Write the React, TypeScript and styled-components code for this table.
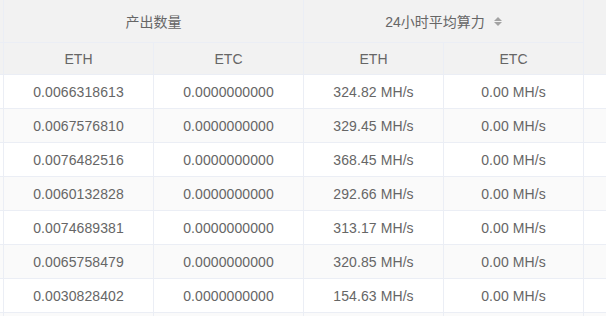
import React from 'react';
import styled, { createGlobalStyle } from 'styled-components';

const GlobalStyle = createGlobalStyle`
  html, body {
    margin: 0;
    padding: 0;
    background: #fff;
  }
  body {
    font-family: 'Liberation Sans', Arial, 'Noto Sans CJK SC', sans-serif;
    font-size: 14px;
    color: #666;
    overflow: hidden;
  }
`;

const borderColor = '#ebeef5';

const Table = styled.div`
  display: grid;
  grid-template-columns: 4px 150px 150px 140px 140px 1fr;
  grid-template-rows: 43px 32px;
  grid-auto-rows: 34px;
  width: 606px;
  height: 316px;
  overflow: hidden;
`;

const HeadCell = styled.div<{ $rows?: number; $cols?: number; $last?: boolean }>`
  grid-row: span ${p => p.$rows || 1};
  grid-column: span ${p => p.$cols || 1};
  background: #f2f2f2;
  border-right: ${p => (p.$last ? 'none' : `1px solid ${borderColor}`)};
  border-bottom: 1px solid ${borderColor};
  display: flex;
  align-items: center;
  justify-content: center;
  color: #666;
  font-family: 'Liberation Sans', 'Noto Sans CJK SC', sans-serif;
`;

const Cell = styled.div<{ $striped?: boolean; $last?: boolean }>`
  background: ${p => (p.$striped ? '#fafafa' : '#fff')};
  border-right: ${p => (p.$last ? 'none' : `1px solid ${borderColor}`)};
  border-bottom: 1px solid ${borderColor};
  display: flex;
  align-items: center;
  justify-content: center;
  white-space: nowrap;
  overflow: hidden;
  letter-spacing: 0.1px;
`;

const SortIcon = styled.span`
  display: inline-flex;
  flex-direction: column;
  gap: 1px;
  margin-left: 9px;
  margin-top: 1px;

  i {
    width: 0;
    height: 0;
    border-left: 4.5px solid transparent;
    border-right: 4.5px solid transparent;
  }
  i:first-child {
    border-bottom: 4px solid #a3a3a3;
  }
  i:last-child {
    border-top: 4px solid #a3a3a3;
  }
`;

const rows = [
  ['0.0066318613', '0.0000000000', '324.82 MH/s', '0.00 MH/s'],
  ['0.0067576810', '0.0000000000', '329.45 MH/s', '0.00 MH/s'],
  ['0.0076482516', '0.0000000000', '368.45 MH/s', '0.00 MH/s'],
  ['0.0060132828', '0.0000000000', '292.66 MH/s', '0.00 MH/s'],
  ['0.0074689381', '0.0000000000', '313.17 MH/s', '0.00 MH/s'],
  ['0.0065758479', '0.0000000000', '320.85 MH/s', '0.00 MH/s'],
  ['0.0030828402', '0.0000000000', '154.63 MH/s', '0.00 MH/s'],
  ['', '', '', ''],
];

const App: React.FC = () => {
  return (
    <>
      <GlobalStyle />
      <Table>
        <HeadCell />
        <HeadCell $cols={2}>产出数量</HeadCell>
        <HeadCell $cols={2}>
          24小时平均算力
          <SortIcon>
            <i />
            <i />
          </SortIcon>
        </HeadCell>
        <HeadCell $rows={2} $last />
        <HeadCell />
        <HeadCell>ETH</HeadCell>
        <HeadCell>ETC</HeadCell>
        <HeadCell>ETH</HeadCell>
        <HeadCell>ETC</HeadCell>

        {rows.map((r, i) => {
          const striped = i % 2 === 1;
          return (
            <React.Fragment key={i}>
              <Cell $striped={striped} />
              {r.map((v, j) => (
                <Cell key={j} $striped={striped}>
                  {v}
                </Cell>
              ))}
              <Cell $striped={striped} $last />
            </React.Fragment>
          );
        })}
      </Table>
    </>
  );
};

export default App;
